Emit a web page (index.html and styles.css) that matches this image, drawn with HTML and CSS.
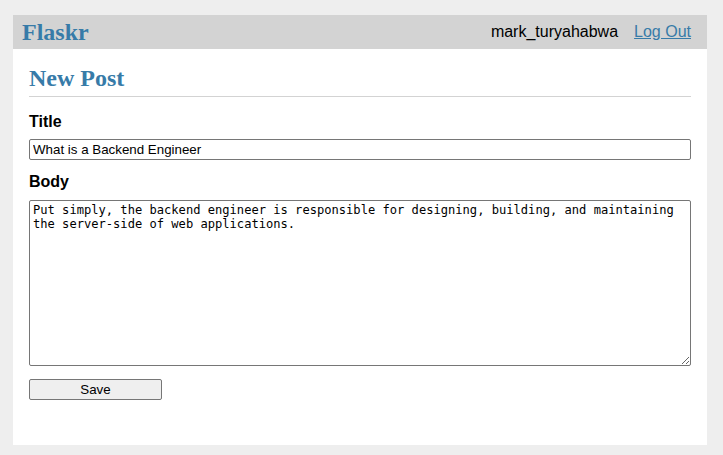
FILE: index.html
```html
<!doctype html>
<html lang="en">
<head>
<meta charset="utf-8">
<title>New Post - Flaskr</title>
<link rel="stylesheet" href="styles.css">
</head>
<body>
<nav class="nav">
  <h1 class="brand">Flaskr</h1>
  <ul class="nav-links">
    <li><span class="nav-item">mark_turyahabwa</span></li>
    <li><a class="nav-item nav-link" href="#">Log Out</a></li>
  </ul>
</nav>
<section class="content">
  <header class="page-header">
    <h1 class="page-title">New Post</h1>
  </header>
  <form class="post-form" method="post">
    <label class="field-label" for="title">Title</label>
    <input class="field-input" name="title" id="title" value="What is a Backend Engineer">
    <label class="field-label" for="body">Body</label>
    <textarea class="field-textarea" name="body" id="body">Put simply, the backend engineer is responsible for designing, building, and maintaining the server-side of web applications.</textarea>
    <input class="save-button" type="submit" value="Save">
  </form>
</section>
</body>
</html>
```

FILE: styles.css
```css
html {
  font-family: "Liberation Sans", Arial, sans-serif;
  background: #eeeeee;
  padding: 15px 16px 0 13px;
  margin: 0;
}

body {
  margin: 0;
  background: #ffffff;
  color: #000000;
}

.nav {
  display: flex;
  align-items: center;
  height: 34px;
  padding: 0 8px;
  background: #d3d3d3;
}

.brand {
  flex: auto;
  margin: 0;
  padding-left: 1px;
  font-family: "Liberation Serif", "Times New Roman", serif;
  font-size: 24px;
  font-weight: bold;
  line-height: 27px;
  color: #377ba8;
}

.nav-links {
  display: flex;
  list-style: none;
  margin: 0;
  padding: 0;
}

.nav-item {
  display: block;
  padding: 8px;
  font-size: 16px;
  line-height: 18px;
}

.nav-link {
  color: #377ba8;
}

.content {
  padding: 0 16px 29px;
}

.page-header {
  display: flex;
  align-items: flex-end;
  border-bottom: 1px solid #d3d3d3;
}

.page-title {
  flex: auto;
  margin: 16px 0 4px 0;
  font-family: "Liberation Serif", "Times New Roman", serif;
  font-size: 24px;
  font-weight: bold;
  line-height: 27px;
  color: #377ba8;
}

.post-form {
  display: flex;
  flex-direction: column;
  margin: 16px 0;
}

.field-label {
  font-size: 16px;
  font-weight: bold;
  line-height: 18.4px;
  margin-bottom: 8px;
}

.field-input {
  box-sizing: border-box;
  height: 21px;
  margin: 0 0 13px;
  padding: 1px 3px;
  border: 1px solid #767676;
  border-radius: 2px;
  font-family: "Liberation Sans", Arial, sans-serif;
  font-size: 13.33px;
  line-height: 15px;
  color: #000000;
  background: #ffffff;
}

.field-textarea {
  box-sizing: border-box;
  height: 166px;
  margin: 0 0 13px;
  padding: 2px 3px;
  border: 1px solid #767676;
  border-radius: 2px;
  font-family: "DejaVu Sans Mono", "Liberation Mono", monospace;
  font-size: 12.1px;
  line-height: 14.5px;
  color: #000000;
  resize: vertical;
}

.save-button {
  align-self: flex-start;
  box-sizing: border-box;
  width: 133px;
  height: 21px;
  margin: 0;
  padding: 0;
  border: 1px solid #767676;
  border-radius: 2px;
  background: #efefef;
  font-family: "Liberation Sans", Arial, sans-serif;
  font-size: 13.33px;
  color: #000000;
}
```
